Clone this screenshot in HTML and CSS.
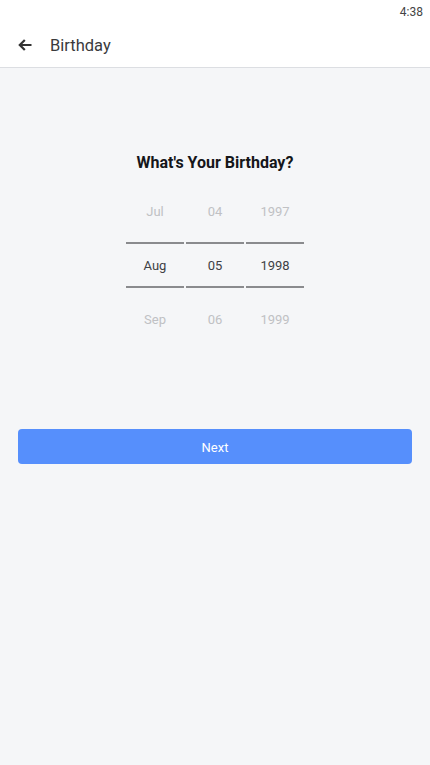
FILE: index.html
```html
<!DOCTYPE html>
<html>
<head>
<meta charset="utf-8">
<link rel="stylesheet" href="styles.css">
</head>
<body>
<div class="screen">
  <div class="statusbar"><span class="time">4:38</span></div>
  <header class="appbar">
    <svg class="back" width="16" height="16" viewBox="0 0 16 16"><path d="M14.5 8H3M7.8 3L2.8 8 7.8 13" fill="none" stroke="#333" stroke-width="2.2"/></svg>
    <span class="title">Birthday</span>
  </header>
  <main class="content">
    <h1 class="heading">What's Your Birthday?</h1>
    <div class="picker">
      <div class="col">
        <div class="item faded">Jul</div>
        <div class="item selected">Aug</div>
        <div class="item faded">Sep</div>
      </div>
      <div class="col">
        <div class="item faded">04</div>
        <div class="item selected">05</div>
        <div class="item faded">06</div>
      </div>
      <div class="col">
        <div class="item faded">1997</div>
        <div class="item selected">1998</div>
        <div class="item faded">1999</div>
      </div>
    </div>
    <button class="next">Next</button>
  </main>
</div>
</body>
</html>
```
FILE: styles.css
```css
* { box-sizing: border-box; }
html, body { margin: 0; padding: 0; }
body {
  font-family: Roboto, "Liberation Sans", sans-serif;
  background: #f5f6f8;
  width: 430px;
  height: 765px;
  overflow: hidden;
}
.screen { display: flex; flex-direction: column; height: 765px; }
.statusbar {
  height: 22px;
  background: #fff;
  display: flex;
  justify-content: flex-end;
  align-items: center;
  padding: 2px 7px 0 0;
}
.time { font-size: 12px; color: #444; }
.appbar {
  height: 46px;
  background: #fff;
  border-bottom: 1px solid #dcdee2;
  display: flex;
  align-items: center;
  padding: 1px 0 0 17px;
}
.back { margin-right: 17px; }
.title { font-size: 16.5px; color: #3a3a3c; }
.content {
  flex: 1;
  display: flex;
  flex-direction: column;
  align-items: center;
  padding-top: 84px;
}
.heading {
  margin: 0;
  font-size: 16px;
  font-weight: 700;
  color: #15161a;
  line-height: 22px;
}
.picker {
  display: flex;
  gap: 2px;
  margin-top: 10px;
}
.col { width: 58px; display: flex; flex-direction: column; }
.item {
  height: 54px;
  display: flex;
  align-items: center;
  justify-content: center;
  font-size: 13px;
}
.faded { color: #c0c1c4; }
.selected {
  height: 46px;
  margin: 4px 0 4px;
  border-top: 2px solid #8a8b8e;
  border-bottom: 2px solid #8a8b8e;
  color: #404145;
}
.next {
  margin-top: 83px;
  width: 394px;
  height: 35px;
  border: none;
  border-radius: 4px;
  background: #568ffc;
  color: #fff;
  font-family: Roboto, "Liberation Sans", sans-serif;
  font-size: 13px;
  padding-top: 2px;
}
```
